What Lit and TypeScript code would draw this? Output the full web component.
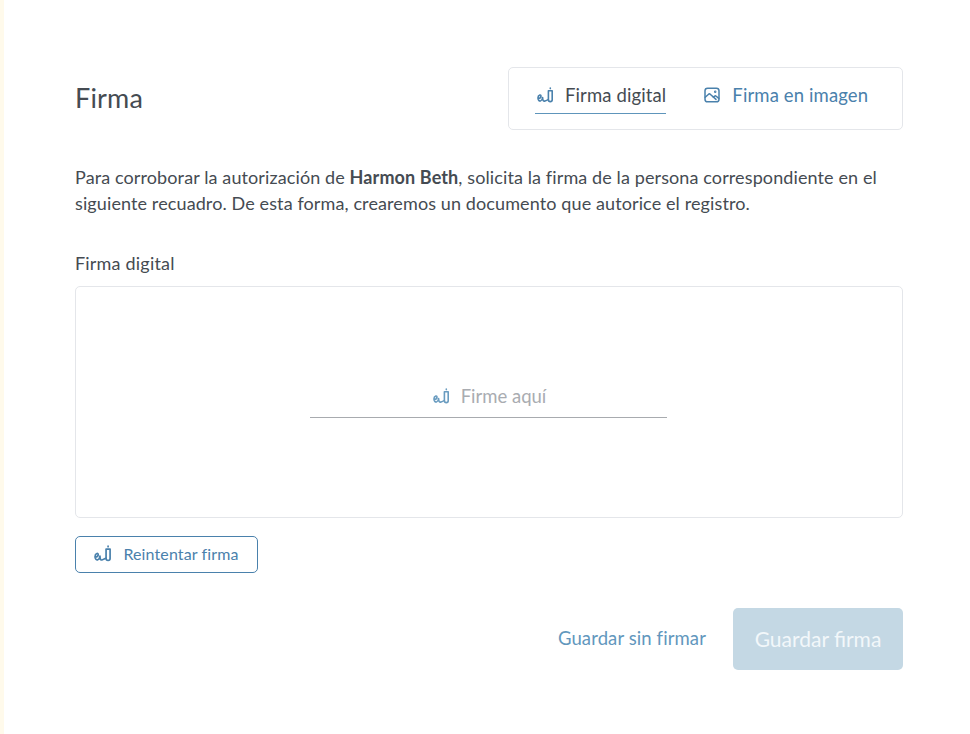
import { LitElement, html, css, svg } from "lit";
import { customElement } from "lit/decorators.js";

const signIcon = (cls: string) => html`<svg class=${cls} viewBox="0 0 17 16" fill="none" stroke="currentColor" stroke-width="1.6" stroke-linecap="round" stroke-linejoin="round">
  ${svg`<path d="M1 11.500C2.600 11.500 4 10.400 4 9 4 8.200 3.400 7.800 2.800 8 1.600 8.400.9 9.800 1 11.300 1.100 13 2.200 14.300 3.500 14 4.700 13.700 5.300 12.600 5.500 11L5.600 10.500 5.800 12.300C5.900 13.600 6.600 14.300 7.500 14.100 8.900 13.800 9.800 13.300 11.300 12.500"/>
  <path d="M11.400 3.800h3.800v9c0 1-.8 1.800-1.900 1.800s-1.900-.8-1.900-1.800z"/>
  <path d="M13.300 1.100v.5"/>`}
</svg>`;

const imageIcon = html`<svg class="ico-img" viewBox="0 0 16 16" fill="none" stroke="currentColor" stroke-width="1.500" stroke-linecap="round" stroke-linejoin="round">
  ${svg`<rect x="1" y="1.200" width="14" height="13.600" rx="2.600"/>
  <path d="M1.200 10.200 4.600 7.200c.5-.4 1.100-.4 1.600 0L12 12.400"/>
  <path d="M9.400 10.200l1.300-1c.5-.4 1.100-.4 1.500 0l2.600 2.200"/>
  <circle cx="11.200" cy="4.800" r=".5"/>`}
</svg>`;

@customElement("app-root")
export class AppRoot extends LitElement {
  static styles = css`
    :host {
      display: block;
      height: 734px;
      background: #fff;
      font-family: "Lato", "Noto Sans", sans-serif;
      color: #454b52;
      box-sizing: border-box;
      border-left: 4px solid #fffaeb;
      overflow: hidden;
    }
    .page {
      padding: 67px 67px 0 71px;
    }
    .head {
      display: flex;
      justify-content: space-between;
      align-items: center;
    }
    h1 {
      margin: 0;
      font-size: 27px;
      font-weight: 400;
      line-height: 61px;
      padding-bottom: 2px;
      letter-spacing: 0.2px;
    }
    .tabs {
      box-sizing: border-box;
      width: 395px;
      height: 63px;
      border: 1px solid #e4e6ea;
      border-radius: 5px;
      display: flex;
      gap: 38px;
      padding: 0 0 0 26px;
    }
    .tab {
      height: 46px;
      display: flex;
      align-items: center;
      gap: 12px;
      font-size: 18.500px;
      letter-spacing: 0.12px;
      color: #4a81ac;
      box-sizing: border-box;
      padding-top: 9px;
      border-bottom: 1.500px solid transparent;
    }
    .tab.active {
      color: #454b52;
      gap: 11px;
      border-bottom-color: #5e95bb;
    }
    .tab.active .ico-sign {
      margin-left: 2px;
    }
    .ico-sign {
      width: 17px;
      height: 16px;
      color: #4a81ac;
      flex: none;
    }
    .ico-img {
      width: 16px;
      height: 16px;
      flex: none;
    }
    p {
      margin: 34px 0 0;
      font-size: 18px;
      letter-spacing: 0.11px;
      line-height: 26px;
    }
    label {
      display: block;
      margin-top: 35px;
      font-size: 18px;
      letter-spacing: 0.2px;
      line-height: 24px;
    }
    .canvas {
      box-sizing: border-box;
      margin-top: 11px;
      height: 232px;
      border: 1px solid #e4e6ea;
      border-radius: 5px;
      padding-top: 94px;
      display: flex;
      justify-content: center;
    }
    .line {
      box-sizing: border-box;
      width: 357px;
      height: 37px;
      margin-left: -1px;
      border-bottom: 1px solid #a8abaf;
      display: flex;
      justify-content: center;
      align-items: center;
      gap: 11px;
      font-size: 18.500px;
      color: #a9acb1;
      padding: 0 0 7px 2px;
    }
    .line .ico-sign {
      color: #6a9cc0;
    }
    .retry {
      box-sizing: border-box;
      margin-top: 18px;
      width: 183px;
      height: 37px;
      border: 1px solid #4a81ac;
      border-radius: 5px;
      background: #fff;
      display: flex;
      align-items: center;
      justify-content: center;
      gap: 11px;
      font: inherit;
      font-size: 16px;
      letter-spacing: 0.12px;
      color: #4a81ac;
      padding: 0 0 2px;
    }
    .retry .ico-sign {
      width: 18px;
      height: 17px;
    }
    .actions {
      margin-top: 35px;
      display: flex;
      justify-content: flex-end;
      align-items: center;
      gap: 27px;
    }
    .ghost {
      font-size: 18.500px;
      letter-spacing: 0.1px;
      color: #6297bd;
      padding-bottom: 2px;
    }
    .save {
      box-sizing: border-box;
      width: 170px;
      height: 62px;
      border-radius: 5px;
      background: #c4d8e4;
      color: #f2f7fa;
      font-size: 21px;
      padding-bottom: 2px;
      display: flex;
      align-items: center;
      justify-content: center;
    }
  `;

  render() {
    return html`<div class="page">
      <div class="head">
        <h1>Firma</h1>
        <div class="tabs">
          <div class="tab active">${signIcon("ico-sign")}<span>Firma digital</span></div>
          <div class="tab">${imageIcon}<span>Firma en imagen</span></div>
        </div>
      </div>
      <p>Para corroborar la autorización de <b>Harmon Beth</b>, solicita la firma de la persona correspondiente en el siguiente recuadro. De esta forma, crearemos un documento que autorice el registro.</p>
      <label>Firma digital</label>
      <div class="canvas">
        <div class="line">${signIcon("ico-sign")}<span>Firme aquí</span></div>
      </div>
      <button class="retry">${signIcon("ico-sign")}<span>Reintentar firma</span></button>
      <div class="actions">
        <span class="ghost">Guardar sin firmar</span>
        <div class="save">Guardar firma</div>
      </div>
    </div>`;
  }
}
